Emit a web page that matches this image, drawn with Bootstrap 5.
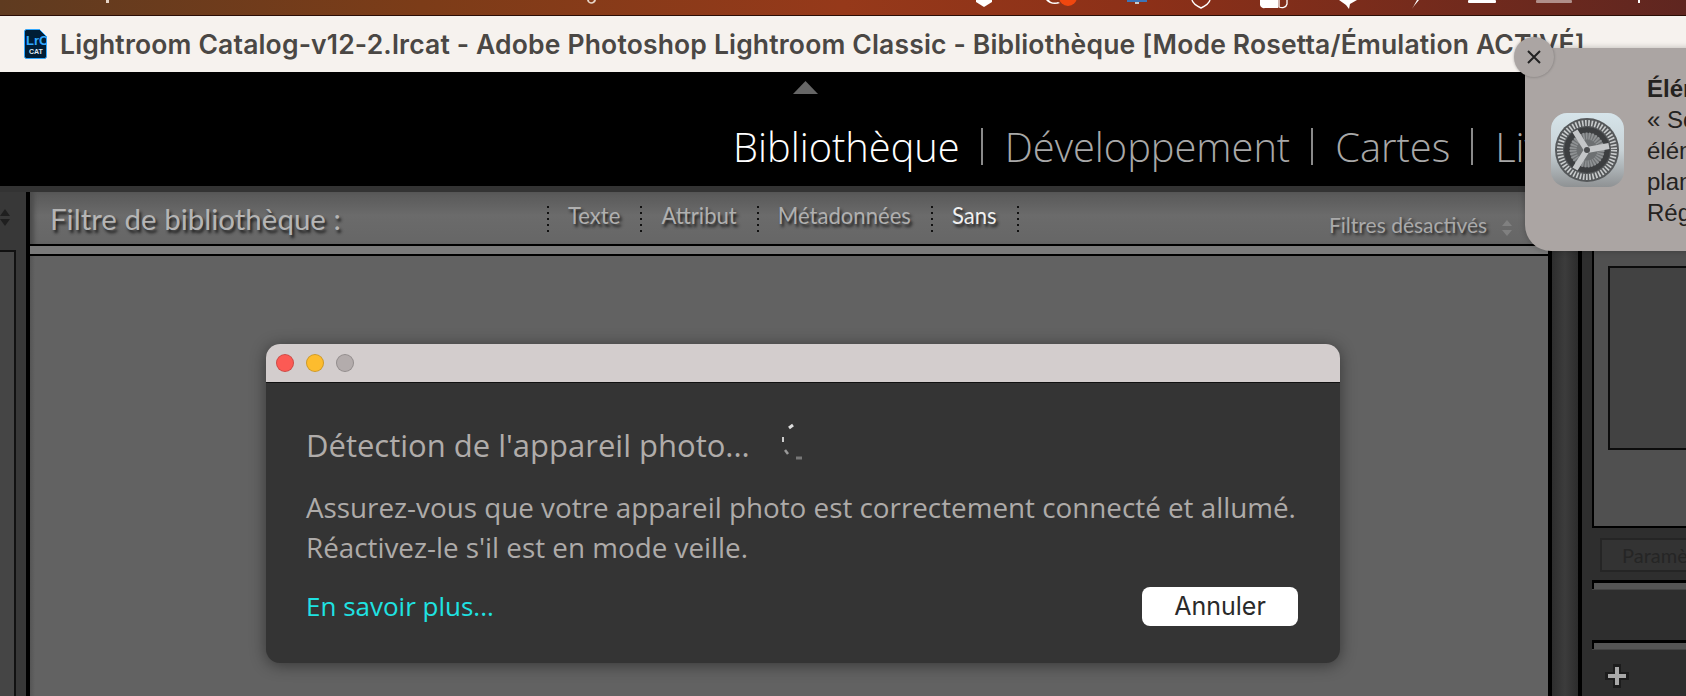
<!DOCTYPE html>
<html lang="fr">
<head>
<meta charset="utf-8">
<title>Lightroom Classic</title>
<link href="https://cdn.jsdelivr.net/npm/bootstrap@5.3.0/dist/css/bootstrap.min.css" rel="stylesheet">
<style>
html,body{width:1686px;height:696px;overflow:hidden;background:#000}
.lr-page{width:1686px;height:696px;position:relative;overflow:hidden}
.lr-menubar{height:16px;background:linear-gradient(90deg,#5f3b20 0,#7c3c18 25%,#96391a 50%,#8c3018 68%,#5f2620 100%);border-bottom:1px solid #2a0d05;flex:none}
.lr-menubar svg{display:block}
.lr-titlebar{height:56px;background:#f6f2ee;flex:none;padding-left:24px;gap:13px}
.lr-titlebar svg{flex:none}
.lr-titletext{font:600 26.5px Inter,"Liberation Sans",sans-serif;letter-spacing:.16px;color:#4a4744;white-space:nowrap}
.lr-top{height:114px;background:#000;flex:none;position:relative;padding-left:733px;padding-top:48px}
.lr-tri{width:25px;height:13px;background:#666;clip-path:polygon(50% 0,100% 100%,0 100%);position:absolute;left:793px;top:9px}
.lr-tab{font:300 39.8px/54px "Open Sans",sans-serif;color:#a8a8a8;white-space:nowrap}
.lr-tab.is-on{color:#fff}
.lr-tabsep{width:2px;height:37px;background:#8a8a8a;margin:8px 22px 0 21px;flex:none}
.lr-work{flex:1;min-height:0;background:#333;padding-top:6px}
.lr-leftcol{width:26px;flex:none;background:#383838}
.lr-rule{width:4px;flex:none;background:#000}
.lr-center{width:1518px;flex:none;background:#606060}
.lr-filter{height:52px;background:linear-gradient(180deg,#585858,#6b6b6b 45%,#666);flex:none;position:relative;font-family:Lato,sans-serif;padding-left:20px;box-shadow:inset 6px 0 4px -2px #4c4c4c}
.lr-filter-title{font-size:29.5px;color:#b5b5b5;text-shadow:2px 3px 3px #1c1c1c;width:497px;flex:none;margin-top:7px;line-height:40px;white-space:nowrap}
.lr-filter-item{font-size:22.1px;color:#b0b0b0;text-shadow:2px 3px 3px #1c1c1c;line-height:30px;white-space:nowrap;margin:9px 20px 0 19px}
.lr-filter-item.is-on{color:#f0f0f0}
.lr-dots{width:2px;height:26px;margin-top:14px;flex:none;background:repeating-linear-gradient(180deg,#111 0 2px,transparent 2px 6px)}
.lr-filter-off{position:absolute;left:1299px;top:19px;font-size:21px;line-height:28px;color:#aaa;text-shadow:2px 2px 3px #222;white-space:nowrap}
.lr-strip{height:12px;flex:none;background:#7a7a7a;border-top:2px solid #000;border-bottom:2px solid #000}
.lr-canvas{flex:1;background:linear-gradient(90deg,#555 0,#626262 5px,#626262 100%)}
.lr-side{width:26px;flex:none;background:linear-gradient(90deg,#2e2e2e,#3c3c3c 50%,#2c2c2c)}
.lr-right{flex:1;background:#2e2e2e;padding-left:10px}
.lr-bigbox{height:336px;background:#505050;border-left:2px solid #000;border-bottom:2px solid #000;padding:74px 0 0 14px;flex:none}
.lr-innerbox{height:184px;background:#424242;border:2px solid #0c0c0c;border-right:0}
.lr-param{height:34px;margin:10px 0 8px 8px;border:2px solid #252525;border-right:0;background:#333;color:#252525;font:20px/30px Lato,sans-serif;padding-left:20px;white-space:nowrap;overflow:hidden}
.lr-bar{height:9px;background:#555;border-top:3px solid #000;border-left:2px solid #000;flex:none;box-shadow:0 1px 0 #444}
.lr-barspace{height:51px;flex:none}
.lr-plus{width:24px;height:24px;margin:15px 0 0 13px;flex:none}
.lr-updown{width:12px;display:block;margin-top:16px;flex:none}
.lr-leftbox{margin-top:22px;background:#454545;border-top:2px solid #111;border-right:2px solid #111;width:16px}
.lr-dialog{position:absolute;left:266px;top:344px;width:1074px;height:319px;border-radius:14px;background:#343434;overflow:hidden;box-shadow:0 2px 16px rgba(0,0,0,.45);font-family:"Open Sans",sans-serif}
.lr-dlghead{height:39px;background:#d3cdcd;border-bottom:1px solid #111;padding-left:10px;gap:12px}
.lr-light{width:18px;height:18px;border-radius:50%;border:1px solid rgba(0,0,0,.18)}
.lr-dlgbody{padding:0 42px 0 40px}
.lr-dlgtitle{font-size:31px;line-height:44px;margin-top:40px;color:#b0acaa;font-weight:400;white-space:nowrap}
.lr-dlgtext{font-size:27.8px;line-height:40px;margin-top:20px;color:#aeaba9;white-space:nowrap;font-weight:400}
.lr-dlgfoot{margin-top:19px}
.lr-link{color:#1fe2e2;font-size:26px;text-decoration:none;line-height:40px}
.lr-cancel{width:156px;height:39px;padding:0;border-radius:8px;background:#fff;color:#2a2a2a;font:25px/37px Inter,sans-serif;border:0}
.lr-spin{position:absolute;left:465px;top:0}
.lr-notif{position:absolute;left:1525px;top:48px;width:200px;height:203px;border-radius:26px;background:#aba5a3;box-shadow:0 0 6px rgba(0,0,0,.25);padding:65px 0 0 26px;gap:23px}
.lr-notif svg{flex:none}
.lr-notif-text{font:24px/31px "Liberation Sans",sans-serif;color:#242220;margin-top:-40px;white-space:nowrap}
.lr-close{position:absolute;left:1514px;top:37px;width:40px;height:40px;border-radius:50%;background:#aba5a3;box-shadow:0 0 3px rgba(0,0,0,.3);color:#222}
</style>
</head>
<body>
<div class="lr-page d-flex flex-column">
  <div class="lr-menubar">
    <svg width="1686" height="15" viewBox="0 0 1686 15">
      <path d="M976 0h16v2l-8 5-8-5z" fill="#fff"/>
      <path d="M1046 0h3c2 3 6 3 9 2l2 1c-5 2-11 1-14-3z" fill="#fff"/>
      <circle cx="1068" cy="-3" r="9" fill="#f0470f"/>
      <rect x="1127" y="0" width="20" height="2" fill="#3d74b8"/>
      <rect x="1135" y="2" width="4" height="2" fill="#c9c9c9"/>
      <path d="M1192 0c1 4 5 6 9 8 4-2 8-4 9-8" fill="none" stroke="#fff" stroke-width="1.4"/>
      <path d="M1260 0h18v8h-13a4 4 0 0 1-5-3z" fill="#fff"/>
      <path d="M1279 0v7c3 1 7 1 8-3V0" fill="none" stroke="#fff" stroke-width="1.3"/>
      <path d="M1339 0h18l-7 4-1 5-3-4z" fill="#fff"/>
      <path d="M1412 9l5-9h2l-5 6z" fill="#fff"/>
      <rect x="1468" y="0" width="28" height="3" rx="1" fill="#fff"/>
      <rect x="1536" y="0" width="36" height="3" rx="1" fill="#b08f8a"/>
      <path d="M1638 0h2v3h-2z" fill="#fff"/>
      <path d="M106 0h3v3h-3z" fill="#e6d4c6"/>
      <path d="M587 0h2c0 3 4 3 5 0h2c-1 5-8 5-9 0z" fill="#e6d4c6"/>
    </svg>
  </div>
  <div class="lr-titlebar d-flex align-items-center">
    <svg width="23" height="30" viewBox="0 0 23 30" aria-hidden="true">
      <path d="M2.5.5h13l7 7v20a2 2 0 0 1-2 2h-18a2 2 0 0 1-2-2v-25a2 2 0 0 1 2-2z" fill="#001e36" stroke="#31a8ff"/>
      <text x="2" y="16" font-family="Liberation Sans" font-size="13" font-weight="700" fill="#31a8ff">LrC</text>
      <text x="5" y="25" font-family="Liberation Sans" font-size="7" font-weight="700" fill="#dfeaf3">CAT</text>
    </svg>
    <span class="lr-titletext">Lightroom Catalog-v12-2.lrcat - Adobe Photoshop Lightroom Classic - Bibliothèque [Mode Rosetta/Émulation ACTIVÉ]</span>
  </div>
  <div class="lr-top d-flex">
    <div class="lr-tri"></div>
    <span class="lr-tab is-on">Bibliothèque</span>
    <span class="lr-tabsep"></span>
    <span class="lr-tab">Développement</span>
    <span class="lr-tabsep"></span>
    <span class="lr-tab">Cartes</span>
    <span class="lr-tabsep"></span>
    <span class="lr-tab">Livre</span>
  </div>
  <div class="lr-work d-flex">
    <div class="lr-leftcol d-flex flex-column">
      <svg class="lr-updown" height="20" viewBox="0 0 12 20"><path d="M0 8 5 1l5 7zM0 11l5 7 5-7z" fill="#1f1f1f"/></svg>
      <div class="lr-leftbox flex-grow-1"></div>
    </div>
    <div class="lr-rule"></div>
    <div class="lr-center d-flex flex-column position-relative">
      <div class="lr-filter d-flex">
        <span class="lr-filter-title">Filtre de bibliothèque :</span>
        <span class="lr-dots"></span>
        <span class="lr-filter-item">Texte</span>
        <span class="lr-dots"></span>
        <span class="lr-filter-item">Attribut</span>
        <span class="lr-dots"></span>
        <span class="lr-filter-item">Métadonnées</span>
        <span class="lr-dots"></span>
        <span class="lr-filter-item is-on">Sans</span>
        <span class="lr-dots"></span>
        <span class="lr-filter-off">Filtres désactivés <svg width="12" height="18" viewBox="0 0 12 18" class="ms-2"><path d="M1 7l5-6 5 6zM1 11l5 6 5-6z" fill="#808080"/></svg></span>
      </div>
      <div class="lr-strip"></div>
      <div class="lr-canvas"></div>
    </div>
    <div class="lr-rule"></div>
    <div class="lr-side"></div>
    <div class="lr-rule"></div>
    <div class="lr-right d-flex flex-column">
      <div class="lr-bigbox"><div class="lr-innerbox"></div></div>
      <div class="lr-param">Paramètres</div>
      <div class="lr-bar"></div>
      <div class="lr-barspace"></div>
      <div class="lr-bar"></div>
      <svg class="lr-plus" viewBox="0 0 24 24"><path d="M8 0h8v8h8v8h-8v8H8v-8H0V8h8z" fill="#1c1c1c"/><path d="M10 3h4v7h7v4h-7v7h-4v-7H3v-4h7z" fill="#a8a8a8"/></svg>
    </div>
  </div>

  <div class="lr-dialog">
    <div class="lr-dlghead d-flex align-items-center">
      <span class="lr-light" style="background:#fc5a54"></span>
      <span class="lr-light" style="background:#fdbc2e"></span>
      <span class="lr-light" style="background:#b3acac"></span>
    </div>
    <div class="lr-dlgbody">
      <div class="position-relative">
        <div class="lr-dlgtitle">Détection de l'appareil photo...</div>
        <svg class="lr-spin" width="40" height="40" viewBox="0 0 40 40"><g stroke-linecap="butt"><path d="M22 2l-4 3" stroke="#ddd" stroke-width="3"/><path d="M12 14v5" stroke="#ccc" stroke-width="2"/><path d="M14 27l3 4" stroke="#999" stroke-width="2.5"/><path d="M25 35h6" stroke="#777" stroke-width="3"/></g></svg>
      </div>
      <div class="lr-dlgtext">Assurez-vous que votre appareil photo est correctement connecté et allumé.<br>Réactivez-le s'il est en mode veille.</div>
      <div class="lr-dlgfoot d-flex justify-content-between align-items-center">
        <a class="lr-link" href="#">En savoir plus...</a>
        <button type="button" class="btn lr-cancel">Annuler</button>
      </div>
    </div>
  </div>

  <div class="lr-notif d-flex">
    <svg width="73" height="74" viewBox="0 0 73 74" aria-hidden="true">
      <defs><linearGradient id="g1" x1="0" y1="0" x2="0" y2="1"><stop offset="0" stop-color="#d6e4ea"/><stop offset=".5" stop-color="#c8d2d6"/><stop offset="1" stop-color="#8f9294"/></linearGradient></defs>
      <rect width="73" height="74" rx="16" fill="url(#g1)"/>
      <circle cx="36" cy="37" r="32" fill="#55585a"/>
      <circle cx="36" cy="37" r="27" fill="none" stroke="#c9cccd" stroke-width="6" stroke-dasharray="1.6 1.6"/>
      <circle cx="36" cy="37" r="23" fill="#6d7072"/>
      <circle cx="36" cy="37" r="20" fill="none" stroke="#3c3e40" stroke-width="6"/>
      <circle cx="36" cy="37" r="14" fill="none" stroke="#8f9294" stroke-width="7" stroke-dasharray="1.6 1.2"/>
      <path d="M36 37 58 33M36 37 24 18M36 37 24 56" stroke="#c4c6c8" stroke-width="6" fill="none"/>
      <circle cx="36" cy="37" r="3" fill="#4a4c4e"/>
    </svg>
    <div class="lr-notif-text"><strong>Éléments</strong><br>« Software<br>éléments<br>plan<br>Réglages</div>
  </div>
  <div class="lr-close d-flex align-items-center justify-content-center">
    <svg width="16" height="16" viewBox="0 0 16 16"><path d="M2 2l12 12M14 2 2 14" stroke="#222" stroke-width="2"/></svg>
  </div>
</div>
</body>
</html>
